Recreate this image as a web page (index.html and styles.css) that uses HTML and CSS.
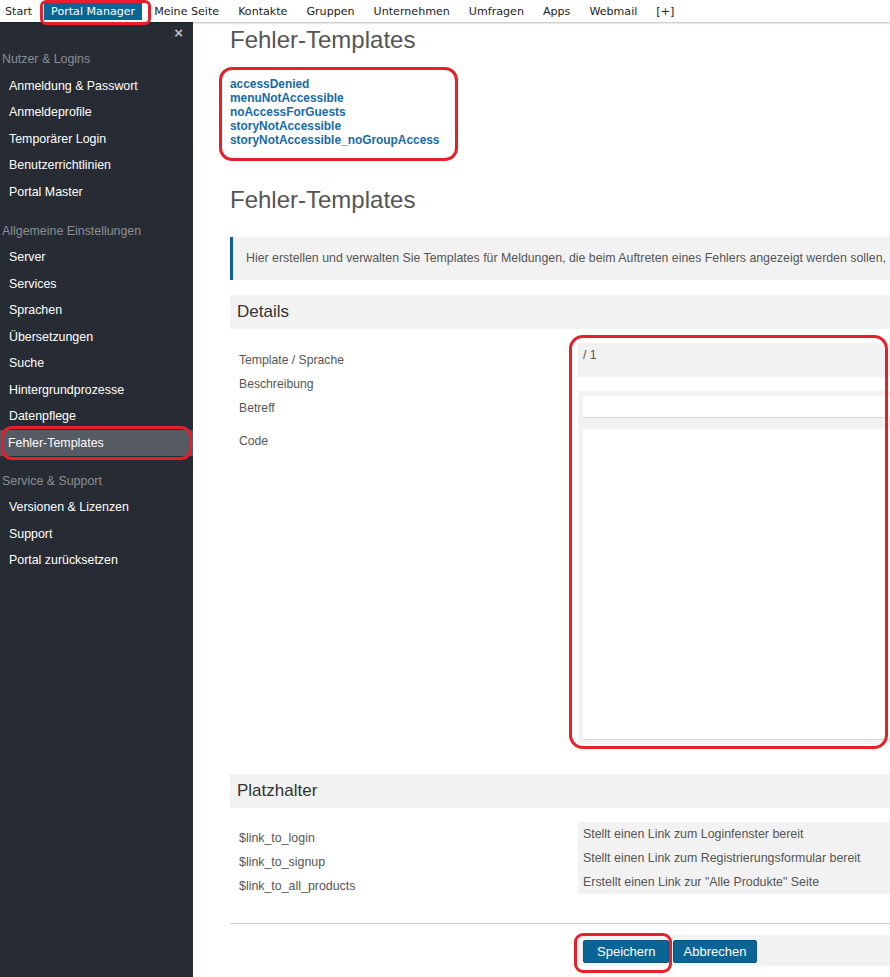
FILE: index.html
```html
<!DOCTYPE html>
<html lang="de">
<head>
<meta charset="utf-8">
<title>Fehler-Templates</title>
<link rel="stylesheet" href="styles.css">
</head>
<body>
<nav class="topnav">
  <a class="nav-item nav-first" href="#">Start</a>
  <a class="nav-item nav-active" href="#">Portal Manager</a>
  <a class="nav-item" href="#">Meine Seite</a>
  <a class="nav-item" href="#">Kontakte</a>
  <a class="nav-item" href="#">Gruppen</a>
  <a class="nav-item" href="#">Unternehmen</a>
  <a class="nav-item" href="#">Umfragen</a>
  <a class="nav-item" href="#">Apps</a>
  <a class="nav-item" href="#">Webmail</a>
  <a class="nav-item" href="#">[+]</a>
</nav>
<div class="layout">
  <aside class="sidebar">
    <div class="sb-close">×</div>
    <div class="sb-head">Nutzer &amp; Logins</div>
    <a class="sb-item" href="#">Anmeldung &amp; Passwort</a>
    <a class="sb-item" href="#">Anmeldeprofile</a>
    <a class="sb-item" href="#">Temporärer Login</a>
    <a class="sb-item" href="#">Benutzerrichtlinien</a>
    <a class="sb-item" href="#">Portal Master</a>
    <div class="sb-head sb-gap">Allgemeine Einstellungen</div>
    <a class="sb-item" href="#">Server</a>
    <a class="sb-item" href="#">Services</a>
    <a class="sb-item" href="#">Sprachen</a>
    <a class="sb-item" href="#">Übersetzungen</a>
    <a class="sb-item" href="#">Suche</a>
    <a class="sb-item" href="#">Hintergrundprozesse</a>
    <a class="sb-item" href="#">Datenpflege</a>
    <a class="sb-item sb-active" href="#">Fehler-Templates</a>
    <div class="sb-head sb-gap2">Service &amp; Support</div>
    <a class="sb-item" href="#">Versionen &amp; Lizenzen</a>
    <a class="sb-item" href="#">Support</a>
    <a class="sb-item" href="#">Portal zurücksetzen</a>
  </aside>
  <main class="main">
    <h1 class="title">Fehler-Templates</h1>
    <ul class="tpl-links">
      <li><a href="#">accessDenied</a></li>
      <li><a href="#">menuNotAccessible</a></li>
      <li><a href="#">noAccessForGuests</a></li>
      <li><a href="#">storyNotAccessible</a></li>
      <li><a href="#">storyNotAccessible_noGroupAccess</a></li>
    </ul>
    <h1 class="title title-2">Fehler-Templates</h1>
    <div class="info">Hier erstellen und verwalten Sie Templates für Meldungen, die beim Auftreten eines Fehlers angezeigt werden sollen,</div>

    <h2 class="section-head">Details</h2>
    <div class="form">
      <div class="f-label f-l1">Template / Sprache</div>
      <div class="f-value f-v1">/ 1</div>
      <div class="f-label f-l2">Beschreibung</div>
      <div class="f-value f-v2"></div>
      <div class="f-label f-l3">Betreff</div>
      <div class="f-value f-v3"><div class="input"></div></div>
      <div class="f-label f-l4">Code</div>
      <div class="f-value f-v4"><div class="textarea"></div></div>
    </div>

    <h2 class="section-head ph-head">Platzhalter</h2>
    <div class="ph">
      <div class="ph-labels">
        <div class="ph-label">$link_to_login</div>
        <div class="ph-label">$link_to_signup</div>
        <div class="ph-label">$link_to_all_products</div>
      </div>
      <div class="ph-values">
        <div class="ph-value">Stellt einen Link zum Loginfenster bereit</div>
        <div class="ph-value">Stellt einen Link zum Registrierungsformular bereit</div>
        <div class="ph-value">Erstellt einen Link zur "Alle Produkte" Seite</div>
      </div>
    </div>

    <hr class="sep">
    <div class="actions">
      <div class="actions-spacer"></div>
      <div class="actions-bar">
        <button class="btn btn-save">Speichern</button>
        <button class="btn btn-cancel">Abbrechen</button>
      </div>
    </div>
  </main>
</div>

<div class="mark mark-nav"></div>
<div class="mark mark-links"></div>
<div class="mark mark-side"></div>
<div class="mark mark-form"></div>
<div class="mark mark-save"></div>
</body>
</html>
```

FILE: styles.css
```css
* { box-sizing: border-box; }
html, body { margin: 0; padding: 0; }
body {
  width: 890px;
  height: 977px;
  overflow: hidden;
  position: relative;
  background: #fff;
  font-family: "Liberation Sans", Arial, sans-serif;
  color: #555;
}
a { text-decoration: none; }

/* top navigation */
.topnav {
  height: 22px;
  display: flex;
  gap: 5px;
  align-items: flex-start;
  background: #fff;
  box-shadow: 0 1px 2px rgba(0,0,0,0.28);
  position: relative;
  z-index: 2;
  font-family: "DejaVu Sans", Verdana, sans-serif;
  font-size: 11.1px;
}
.nav-item {
  display: block;
  margin-top: 3px;
  height: 17px;
  line-height: 17px;
  padding: 0 7px;
  color: #222;
  white-space: nowrap;
}
.nav-first { padding-left: 5px; }
.nav-active { background: #0b6698; color: #fff; }

/* layout */
.layout { display: flex; height: 955px; }

.sidebar {
  width: 193px;
  flex: 0 0 193px;
  background: #272c34;
  display: flex;
  flex-direction: column;
  font-size: 12.4px;
}
.sb-close {
  height: 24.3px;
  line-height: 22px;
  text-align: right;
  padding-right: 10px;
  color: #b9bcc0;
  font-size: 15px;
  font-weight: bold;
}
.sb-head {
  height: 26.5px;
  line-height: 26.5px;
  padding-left: 2px;
  color: #8b8e93;
  white-space: nowrap;
}
.sb-gap { margin-top: 12.5px; }
.sb-gap2 { margin-top: 11.5px; }
.sb-item {
  display: block;
  height: 26.5px;
  line-height: 26.5px;
  padding-left: 9px;
  color: #fff;
  white-space: nowrap;
}
.sb-active { background: #555a63; padding-left: 8px; }

/* main */
.main {
  flex: 0 0 760px;
  width: 760px;
  padding-left: 37px;
}
.title {
  margin: 5px 0 0;
  font-size: 24px;
  line-height: 26px;
  font-weight: normal;
  color: #555;
}
.title-2 { margin-top: 40px; }

.tpl-links {
  list-style: none;
  margin: 24px 0 0;
  padding: 0;
  font-size: 11.9px;
  line-height: 14px;
  font-weight: bold;
}
.tpl-links a { color: #176aa6; }

.info {
  margin-top: 24px;
  background: #f2f2f2;
  border-left: 3px solid #0b6496;
  padding: 14px 0 14px 13px;
  line-height: 15px;
  font-size: 12.35px;
  white-space: nowrap;
  color: #555;
}

.section-head {
  margin: 15px 0 0;
  height: 34px;
  line-height: 34px;
  padding-left: 7px;
  background: #f2f2f2;
  font-size: 17px;
  font-weight: normal;
  color: #333;
}
.ph-head { margin-top: 30px; }

.form {
  margin-top: 14px;
  display: grid;
  grid-template-columns: 348px 1fr;
  font-size: 12.2px;
  line-height: 14px;
}
.f-label { padding-left: 9px; color: #555; }
.f-l1 { padding-top: 10px; height: 34px; }
.f-l2 { height: 14px; }
.f-l3 { padding-top: 10px; }
.f-l4 { padding-top: 10px; }
.f-value { background: #f2f2f2; padding: 5px; }
.f-v1 { height: 34px; padding-top: 5px; color: #555; }
.f-v2 { background: #fff; height: 14px; padding: 0; }
.f-v3 { padding: 5px 0 6px 5px; }
.f-v4 { padding: 5px 0 4px 5px; }
.input {
  height: 22px;
  background: #fff;
  border-bottom: 1px solid #d9d9d9;
}
.textarea {
  height: 311px;
  background: #fff;
  border-bottom: 1px solid #d9d9d9;
}

.ph {
  margin-top: 14px;
  display: grid;
  grid-template-columns: 348px 1fr;
  font-size: 12.4px;
}
.ph-labels { padding-top: 4px; height: 72px; }
.ph-label { height: 24px; line-height: 24px; padding-left: 9px; color: #555; }
.ph-values { background: #f2f2f2; }
.ph-value { height: 24px; line-height: 24px; padding-left: 5px; color: #555; white-space: nowrap; }

.sep {
  margin: 29px 0 0;
  border: 0;
  border-top: 1px solid #cfcfcf;
  height: 0;
}
.actions {
  margin-top: 11px;
  display: grid;
  grid-template-columns: 348px 1fr;
}
.actions-bar {
  background: #f2f2f2;
  padding: 5px 5px 3px;
  display: flex;
  gap: 4px;
}
.btn {
  height: 23px;
  background: #0b6496;
  border: 1px solid #09557f;
  border-radius: 2px;
  color: #fff;
  font-family: "Liberation Sans", Arial, sans-serif;
  font-size: 13px;
  line-height: 21px;
}
.btn-save { padding: 0 12px 0 13px; }
.btn-cancel { padding: 0 10px; }

/* red annotation marks */
.mark {
  position: absolute;
  border: 3.5px solid #e6202b;
  z-index: 5;
  pointer-events: none;
}
.mark-nav { left: 40px; top: 0; width: 111px; height: 25px; border-radius: 6px; }
.mark-links { left: 219px; top: 67px; width: 239px; height: 94px; border-radius: 13px; }
.mark-side { left: 1px; top: 426px; width: 191px; height: 34px; border-radius: 11px; }
.mark-form { left: 569px; top: 335px; width: 319px; height: 414px; border-radius: 14px; }
.mark-save { left: 574px; top: 933px; width: 98px; height: 40px; border-radius: 9px; }
```
